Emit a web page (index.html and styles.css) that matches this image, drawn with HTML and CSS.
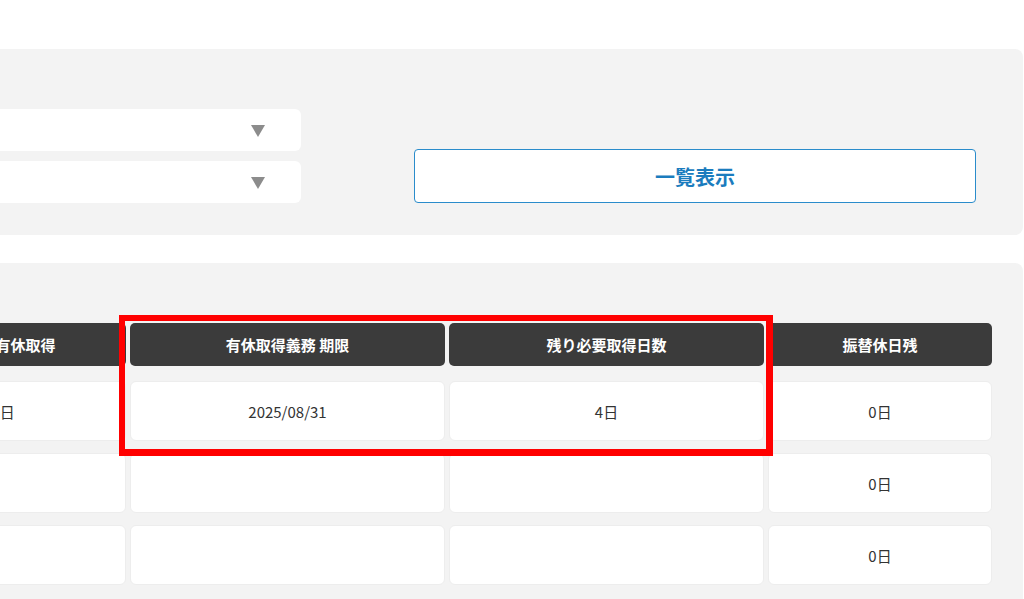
FILE: index.html
```html
<!DOCTYPE html>
<html lang="ja">
<head>
<meta charset="utf-8">
<title>有休取得状況</title>
<link rel="stylesheet" href="styles.css">
</head>
<body>
<div class="page">
  <section class="panel search">
    <div class="selects">
      <div class="select"><span class="caret"><svg width="14" height="12" viewBox="0 0 14 12"><polygon points="0,0 14,0 7,12" fill="#8c8c8c"/></svg></span></div>
      <div class="select"><span class="caret"><svg width="14" height="12" viewBox="0 0 14 12"><polygon points="0,0 14,0 7,12" fill="#8c8c8c"/></svg></span></div>
    </div>
    <button class="list-btn" type="button">一覧表示</button>
  </section>

  <section class="panel results">
    <div class="table">
      <div class="row head">
        <div class="th">当年度有休取得</div>
        <div class="th">有休取得義務 期限</div>
        <div class="th">残り必要取得日数</div>
        <div class="th">振替休日残</div>
      </div>
      <div class="row">
        <div class="td">5日</div>
        <div class="td">2025/08/31</div>
        <div class="td">4日</div>
        <div class="td">0日</div>
      </div>
      <div class="row">
        <div class="td"></div>
        <div class="td"></div>
        <div class="td"></div>
        <div class="td">0日</div>
      </div>
      <div class="row">
        <div class="td"></div>
        <div class="td"></div>
        <div class="td"></div>
        <div class="td">0日</div>
      </div>
      <div class="highlight"></div>
    </div>
  </section>
</div>
</body>
</html>
```

FILE: styles.css
```css
html, body {
  margin: 0;
  padding: 0;
  overflow: hidden;
  background: #ffffff;
  height: 599px;
}

body {
  font-family: "Noto Sans CJK JP", "Noto Sans", sans-serif;
  color: #333333;
}

.page {
  margin-left: -400px;
  padding: 49px 1px 0 0;
  display: flex;
  flex-direction: column;
  gap: 28px;
}

.panel {
  background: #f3f3f3;
  border-radius: 8px;
}

.search {
  display: flex;
  align-items: flex-end;
  padding: 60px 47px 32px 0;
  gap: 113px;
}

.selects {
  width: 701px;
  display: flex;
  flex-direction: column;
  gap: 10px;
}

.select {
  height: 42px;
  background: #ffffff;
  border-radius: 6px;
  display: flex;
  align-items: center;
  justify-content: flex-end;
  padding-right: 36px;
}

.caret {
  display: flex;
  width: 14px;
  height: 12px;
  margin-top: 2px;
}

.list-btn {
  width: 562px;
  height: 54px;
  flex: none;
  background: #ffffff;
  border: 1px solid #2a8ccb;
  border-radius: 4px;
  color: #1b7cbe;
  font-family: "Noto Sans CJK JP", "Noto Sans", sans-serif;
  font-size: 20px;
  font-weight: 700;
  padding: 0;
}

.results {
  padding: 60px 31px 40px 280px;
}

.table {
  position: relative;
  display: flex;
  flex-direction: column;
  gap: 12px;
}

.row {
  display: grid;
  grid-template-columns: 246px 315px 315px 224px;
  column-gap: 4px;
}

.row.head {
  margin-bottom: 3px;
}

.th {
  height: 43px;
  background: #3b3b3b;
  color: #ffffff;
  border-radius: 5px;
  font-size: 15px;
  font-weight: 700;
  display: flex;
  align-items: center;
  justify-content: center;
  white-space: nowrap;
}

.td {
  height: 60px;
  box-sizing: border-box;
  background: #ffffff;
  border: 1px solid #ededed;
  border-radius: 6px;
  font-size: 15px;
  color: #333333;
  display: flex;
  align-items: center;
  justify-content: center;
  white-space: nowrap;
}

.highlight {
  position: absolute;
  left: 239px;
  top: -8px;
  width: 654px;
  height: 141px;
  box-sizing: border-box;
  border-style: solid;
  border-color: #ff0000;
  border-width: 6px 7px 7px 6px;
  pointer-events: none;
}
```
